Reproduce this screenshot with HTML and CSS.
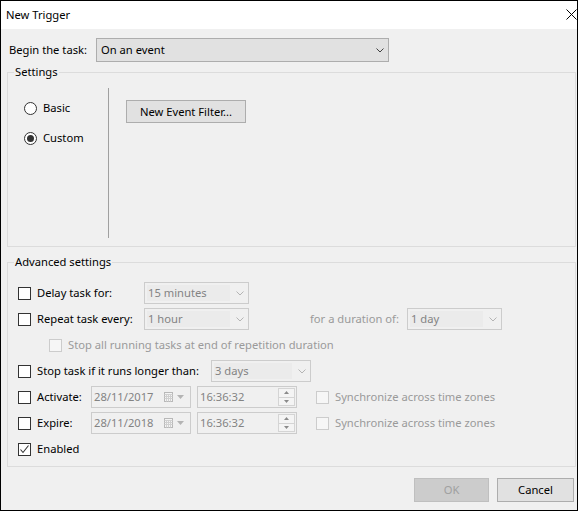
FILE: index.html
```html
<!DOCTYPE html>
<html>
<head>
<meta charset="utf-8">
<title>New Trigger</title>
<link rel="stylesheet" href="styles.css">
</head>
<body>
<div class="window">
  <div class="titlebar">
    <span class="title">New Trigger</span>
    <svg class="close" width="11" height="11" viewBox="0 0 11 11"><path d="M0.5 0.5 L10.5 10.5 M10.5 0.5 L0.5 10.5" stroke="#000" stroke-width="1" fill="none"/></svg>
  </div>
  <div class="content">
    <div class="begin-row">
      <span class="begin-label">Begin the task:</span>
      <div class="combo-main">
        <span>On an event</span>
        <svg class="chev" width="8" height="5" viewBox="0 0 8 5"><polyline points="0.5,0.5 4,4 7.5,0.5" stroke="#404040" fill="none"/></svg>
      </div>
    </div>

    <fieldset class="group settings">
      <legend>Settings</legend>
      <div class="settings-body">
        <div class="radios">
          <div class="radio-row"><span class="radio"></span><span>Basic</span></div>
          <div class="radio-row"><span class="radio checked"></span><span>Custom</span></div>
        </div>
        <div class="vsep"></div>
        <div class="filter-pane"><button class="btn filter-btn">New Event Filter...</button></div>
      </div>
    </fieldset>

    <fieldset class="group advanced">
      <legend>Advanced settings</legend>
      <div class="adv-rows">
        <div class="row">
          <div class="check lbl-wide"><span class="cb"></span><span>Delay task for:</span></div>
          <div class="dcombo w105"><span class="dtext">15 minutes</span><svg class="dchev" width="8" height="5" viewBox="0 0 8 5"><polyline points="0.5,0.5 4,4 7.5,0.5" stroke="#b4b4b4" fill="none"/></svg></div>
        </div>
        <div class="row">
          <div class="check lbl-wide"><span class="cb"></span><span>Repeat task every:</span></div>
          <div class="dcombo w105"><span class="dtext">1 hour</span><svg class="dchev" width="8" height="5" viewBox="0 0 8 5"><polyline points="0.5,0.5 4,4 7.5,0.5" stroke="#b4b4b4" fill="none"/></svg></div>
          <span class="dur-label">for a duration of:</span>
          <div class="dcombo w95"><span class="dtext">1 day</span><svg class="dchev" width="8" height="5" viewBox="0 0 8 5"><polyline points="0.5,0.5 4,4 7.5,0.5" stroke="#b4b4b4" fill="none"/></svg></div>
        </div>
        <div class="row indent">
          <div class="check disabled"><span class="cb dis"></span><span>Stop all running tasks at end of repetition duration</span></div>
        </div>
        <div class="row">
          <div class="check lbl-stop"><span class="cb"></span><span>Stop task if it runs longer than:</span></div>
          <div class="dcombo w100"><span class="dtext">3 days</span><svg class="dchev" width="8" height="5" viewBox="0 0 8 5"><polyline points="0.5,0.5 4,4 7.5,0.5" stroke="#b4b4b4" fill="none"/></svg></div>
        </div>
        <div class="row">
          <div class="check lbl-date"><span class="cb"></span><span>Activate:</span></div>
          <div class="field date"><span class="ftext">28/11/2017</span>
            <svg class="cal" width="9" height="10" viewBox="0 0 9 10"><rect x="0.5" y="0.5" width="8" height="9" fill="#f4f4f4" stroke="#b8b8b8"/><path d="M0.5 2.5 H8.5 M0.5 4.5 H8.5 M0.5 6.5 H8.5 M2.5 2.5 V9.5 M4.5 2.5 V9.5 M6.5 2.5 V9.5" stroke="#d0d0d0"/></svg>
            <svg class="tri" width="7" height="4" viewBox="0 0 7 4"><path d="M0 0 H7 L3.5 4 Z" fill="#b4b4b4"/></svg>
          </div>
          <div class="field time"><span class="ftext">16:36:32</span>
            <div class="spin"><span class="sbtn"><svg width="5" height="3" viewBox="0 0 5 3"><path d="M0 3 H5 L2.5 0 Z" fill="#8a8a8a"/></svg></span><span class="sbtn"><svg width="5" height="3" viewBox="0 0 5 3"><path d="M0 0 H5 L2.5 3 Z" fill="#8a8a8a"/></svg></span></div>
          </div>
          <div class="check disabled sync"><span class="cb dis"></span><span>Synchronize across time zones</span></div>
        </div>
        <div class="row">
          <div class="check lbl-date"><span class="cb"></span><span>Expire:</span></div>
          <div class="field date"><span class="ftext">28/11/2018</span>
            <svg class="cal" width="9" height="10" viewBox="0 0 9 10"><rect x="0.5" y="0.5" width="8" height="9" fill="#f4f4f4" stroke="#b8b8b8"/><path d="M0.5 2.5 H8.5 M0.5 4.5 H8.5 M0.5 6.5 H8.5 M2.5 2.5 V9.5 M4.5 2.5 V9.5 M6.5 2.5 V9.5" stroke="#d0d0d0"/></svg>
            <svg class="tri" width="7" height="4" viewBox="0 0 7 4"><path d="M0 0 H7 L3.5 4 Z" fill="#b4b4b4"/></svg>
          </div>
          <div class="field time"><span class="ftext">16:36:32</span>
            <div class="spin"><span class="sbtn"><svg width="5" height="3" viewBox="0 0 5 3"><path d="M0 3 H5 L2.5 0 Z" fill="#8a8a8a"/></svg></span><span class="sbtn"><svg width="5" height="3" viewBox="0 0 5 3"><path d="M0 0 H5 L2.5 3 Z" fill="#8a8a8a"/></svg></span></div>
          </div>
          <div class="check disabled sync"><span class="cb dis"></span><span>Synchronize across time zones</span></div>
        </div>
        <div class="row">
          <div class="check"><span class="cb checked"><svg width="11" height="11" viewBox="0 0 11 11"><polyline points="1.5,5.5 4,8.5 9.5,1.5" stroke="#333" stroke-width="1.1" fill="none"/></svg></span><span>Enabled</span></div>
        </div>
      </div>
    </fieldset>

    <div class="buttons">
      <button class="btn ok" disabled>OK</button>
      <button class="btn cancel">Cancel</button>
    </div>
  </div>
</div>
</body>
</html>
```

FILE: styles.css
```css
* { box-sizing: border-box; }
html, body { margin: 0; padding: 0; background: #fff; }
body {
  font-family: "Noto Sans", "Open Sans", sans-serif;
  font-size: 11.2px;
  line-height: 16px;
  color: #000;
}
.window {
  width: 578px;
  height: 511px;
  border: 1px solid #000;
  background: #f0f0f0;
  display: flex;
  flex-direction: column;
}
.titlebar {
  height: 28px;
  flex: none;
  background: #fff;
  display: flex;
  align-items: center;
  justify-content: space-between;
  padding-left: 5px;
}
.close { margin-right: 0; margin-top: -1px; }
.content {
  flex: 1;
  display: flex;
  flex-direction: column;
  padding-top: 9px;
}
.begin-row {
  display: flex;
  align-items: center;
  height: 24px;
  padding-left: 8px;
}
.begin-label { width: 87px; }
.combo-main {
  width: 293px;
  height: 24px;
  border: 1px solid #adadad;
  background: #e1e1e1;
  display: flex;
  align-items: center;
  justify-content: space-between;
  padding: 0 4px 0 4px;
}
.group {
  margin: 0 1px 0 6px;
  padding: 0;
  border: 1px solid #dcdcdc;
  min-width: 0;
}
.group legend {
  margin-left: 6px;
  padding: 0 1px;
  line-height: 16px;
}
.settings { margin-top: 2px; }
.settings-body {
  display: flex;
  height: 166px;
}
.radios {
  width: 100px;
  padding: 18px 0 0 16px;
  display: flex;
  flex-direction: column;
  gap: 10px;
}
.radio-row {
  display: flex;
  align-items: center;
  height: 20px;
  gap: 6px;
}
.radio {
  width: 13px;
  height: 13px;
  border: 1px solid #333;
  border-radius: 50%;
  background: #fff;
  display: flex;
  align-items: center;
  justify-content: center;
  flex: none;
}
.radio.checked::after {
  content: "";
  width: 7px;
  height: 7px;
  border-radius: 50%;
  background: #333;
}
.vsep {
  width: 1px;
  background: #a0a0a0;
  margin: 8px 0;
}
.filter-pane { padding: 20px 0 0 17px; }
.btn {
  font: inherit;
  color: #000;
  border: 1px solid #adadad;
  background: #e1e1e1;
  padding: 0;
  margin: 0;
}
.filter-btn { width: 120px; height: 23px; }
.advanced { margin-top: 7px; }
.adv-rows {
  display: flex;
  flex-direction: column;
  gap: 4px;
  padding: 12px 0 6px 10px;
}
.row {
  display: flex;
  align-items: center;
  height: 22px;
}
.row.indent { padding-left: 31px; }
.check {
  display: flex;
  align-items: center;
  gap: 6px;
  white-space: nowrap;
}
.check.disabled { color: #9a9a9a; }
.lbl-wide { width: 126px; }
.lbl-stop { width: 193px; }
.lbl-date { width: 73px; }
.cb {
  width: 13px;
  height: 13px;
  border: 1px solid #333;
  background: #fff;
  flex: none;
  display: flex;
  align-items: center;
  justify-content: center;
}
.cb.dis {
  border-color: #cccccc;
  background: #f6f6f6;
}
.dcombo {
  height: 22px;
  border: 1px solid #cccccc;
  background: #f0f0f0;
  display: flex;
  align-items: center;
  padding: 2px;
  flex: none;
}
.w105 { width: 105px; }
.w95 { width: 95px; }
.w100 { width: 100px; }
.dtext {
  flex: 1;
  height: 16px;
  background: #ebebeb;
  color: #838383;
  padding-left: 1px;
  white-space: nowrap;
}
.dchev { margin: 0 2px 0 6px; flex: none; }
.dur-label {
  margin-left: 61px;
  width: 97px;
  color: #9a9a9a;
  white-space: nowrap;
}
.field {
  height: 22px;
  border: 1px solid #cccccc;
  background: #f0f0f0;
  display: flex;
  align-items: center;
  color: #838383;
  flex: none;
  padding-left: 2px;
}
.field .ftext { flex: 1; white-space: nowrap; }
.date { width: 100px; }
.cal { margin-right: 4px; flex: none; }
.tri { margin-right: 6px; flex: none; }
.time { width: 100px; margin-left: 6px; padding-right: 1px; }
.spin {
  display: flex;
  flex-direction: column;
  width: 17px;
  height: 18px;
}
.sbtn {
  flex: 1;
  border: 1px solid #d4d4d4;
  background: #f4f4f4;
  display: flex;
  align-items: center;
  justify-content: center;
}
.sbtn + .sbtn { border-top: none; }
.sync { margin-left: 19px; }
.buttons {
  display: flex;
  justify-content: flex-end;
  gap: 8px;
  padding: 11px 3px 0 0;
}
.ok, .cancel { height: 24px; }
.ok {
  width: 75px;
  background: #cccccc;
  border-color: #bfbfbf;
  color: #a0a0a0;
}
.cancel { width: 77px; }
```
